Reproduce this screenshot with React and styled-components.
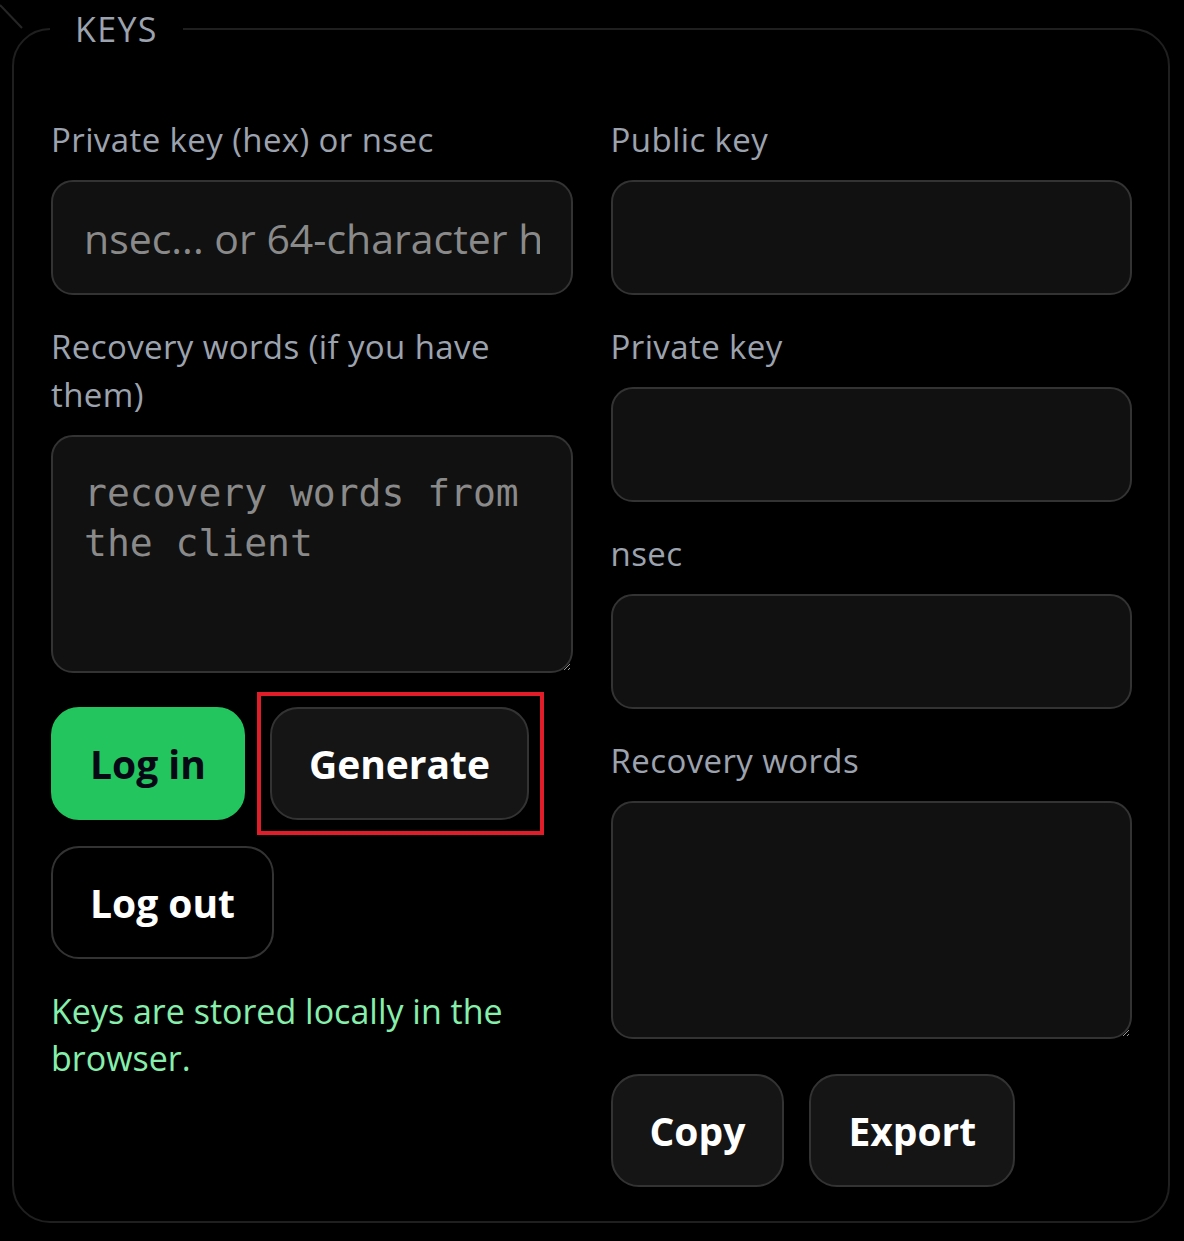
import React from "react";
import styled, { createGlobalStyle } from "styled-components";

const Global = createGlobalStyle`
  html, body { margin: 0; padding: 0; background: #000; color-scheme: dark; }
  body { font-family: "Open Sans", "Noto Sans", sans-serif; color: #e5e7eb; }
  * { box-sizing: border-box; }
`;

const Page = styled.div`
  position: relative;
  padding: 5px 14px 19px 12px;
`;

const CornerMark = styled.svg`
  position: absolute;
  left: 0;
  top: 0;
  width: 26px;
  height: 30px;
`;

const Panel = styled.fieldset`
  margin: 0;
  min-inline-size: 0;
  border: 2px solid #1f1f1f;
  border-radius: 38px;
  padding: 15px 36px 34px 37px;
`;

const Legend = styled.legend`
  margin-left: -1px;
  padding: 0 25px;
  font-size: 34px;
  line-height: 48px;
  letter-spacing: 0.04em;
  color: #9ca3af;
`;

const Columns = styled.div`
  display: grid;
  grid-template-columns: 1fr 1fr;
  column-gap: 38px;
  padding-top: 48px;
`;

const Column = styled.div`
  display: flex;
  flex-direction: column;
  min-width: 0;
`;

const Label = styled.label`
  display: block;
  font-size: 33px;
  letter-spacing: 0.4px;
  line-height: 48px;
  color: #9ca3af;
  margin-bottom: 16px;
`;

const Field = styled.div`
  margin-bottom: 28px;
`;

const TextInput = styled.input`
  display: block;
  width: 100%;
  height: 115px;
  padding: 0 31px;
  border: 2px solid #333;
  border-radius: 22px;
  background: #111;
  color: #ddd;
  font-family: "Open Sans", "Noto Sans", sans-serif;
  font-size: 41px;
  outline: none;
  &::placeholder { color: #8a8a8a; }
`;

const TextArea = styled.textarea`
  display: block;
  width: 100%;
  height: 238px;
  padding: 31px;
  border: 2px solid #333;
  border-radius: 22px;
  background: #111;
  color: #ddd;
  font-family: "DejaVu Sans Mono", "Liberation Mono", monospace;
  font-size: 38px;
  line-height: 50px;
  outline: none;
  &::placeholder { color: #8a8a8a; }
`;

const ButtonRow = styled.div`
  display: flex;
  flex-wrap: wrap;
  column-gap: 25px;
  row-gap: 26px;
  margin-top: ${(p) => p.$top}px;
`;

const Button = styled.button`
  height: 113px;
  padding: 0 37px;
  border-radius: 28px;
  border: 2px solid ${(p) => (p.$variant === "primary" ? "#22c55e" : "#333")};
  background: ${(p) =>
    p.$variant === "primary" ? "#22c55e" : p.$variant === "ghost" ? "#000" : "#151515"};
  color: ${(p) => (p.$variant === "primary" ? "#070716" : "#fff")};
  font-family: "Open Sans", "Noto Sans", sans-serif;
  font-weight: 700;
  font-size: 39px;
  cursor: pointer;
`;

const Highlight = styled.span`
  position: relative;
  display: inline-flex;
  &::after {
    content: "";
    position: absolute;
    top: -15px;
    bottom: -15px;
    left: -13px;
    right: -15px;
    border: 4px solid #e11d2a;
    pointer-events: none;
  }
`;

const Note = styled.p`
  margin: 29px 0 0;
  font-size: 34px;
  line-height: 47px;
  color: #86efac;
`;

export default function App() {
  return (
    <>
      <Global />
      <Page>
        <CornerMark viewBox="0 0 26 30">
          <line x1="0" y1="5" x2="22" y2="28" stroke="#262626" strokeWidth="2" />
        </CornerMark>
        <Panel>
          <Legend>KEYS</Legend>
          <Columns>
            <Column>
              <Label>Private key (hex) or nsec</Label>
              <Field>
                <TextInput placeholder="nsec... or 64-character hex" />
              </Field>
              <Label>Recovery words (if you have them)</Label>
              <TextArea placeholder="recovery words from the client" />
              <ButtonRow $top={34}>
                <Button $variant="primary">Log in</Button>
                <Highlight>
                  <Button>Generate</Button>
                </Highlight>
                <Button $variant="ghost">Log out</Button>
              </ButtonRow>
              <Note>Keys are stored locally in the browser.</Note>
            </Column>
            <Column>
              <Label>Public key</Label>
              <Field>
                <TextInput readOnly />
              </Field>
              <Label>Private key</Label>
              <Field>
                <TextInput readOnly />
              </Field>
              <Label>nsec</Label>
              <Field>
                <TextInput readOnly />
              </Field>
              <Label>Recovery words</Label>
              <TextArea readOnly />
              <ButtonRow $top={35}>
                <Button>Copy</Button>
                <Button>Export</Button>
              </ButtonRow>
            </Column>
          </Columns>
        </Panel>
      </Page>
    </>
  );
}
